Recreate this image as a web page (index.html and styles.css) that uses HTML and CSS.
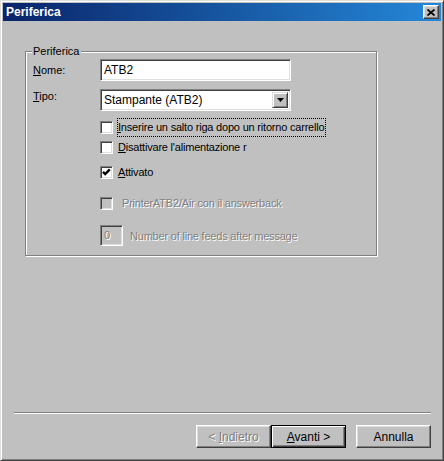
FILE: index.html
```html
<!DOCTYPE html>
<html lang="it">
<head>
    <meta charset="UTF-8">
    <title>Periferica</title>
    <link rel="stylesheet" href="styles.css">
</head>
<body>
    <div class="window">
        <div class="titlebar">
            <span class="title">Periferica</span>
            <div class="close-btn">
                <svg width="8" height="7" viewBox="0 0 8 7">
                    <path d="M0.5 0.5 L7.5 6.5 M7.5 0.5 L0.5 6.5" stroke="#000" stroke-width="1.7" fill="none"/>
                </svg>
            </div>
        </div>

        <div class="content">
            <div class="group">
                <span class="legend">Periferica</span>

                <div class="field-row">
                    <span class="field-label label-nome"><u>N</u>ome:</span>
                    <div class="textbox">ATB2</div>
                </div>

                <div class="field-row row-tipo">
                    <span class="field-label label-tipo"><u>T</u>ipo:</span>
                    <div class="combo">
                        <span class="combo-text">Stampante (ATB2)</span>
                        <div class="combo-btn">
                            <svg width="7" height="4" viewBox="0 0 7 4">
                                <polygon points="0,0 7,0 3.5,4" fill="#000"/>
                            </svg>
                        </div>
                    </div>
                </div>

                <div class="check-row row-1">
                    <span class="checkbox"></span>
                    <span class="check-label focused"><u>I</u>nserire un salto riga dopo un ritorno carrello</span>
                </div>
                <div class="check-row">
                    <span class="checkbox"></span>
                    <span class="check-label"><u>D</u>isattivare l'alimentazione r</span>
                </div>
                <div class="check-row row-3">
                    <span class="checkbox">
                        <svg width="9" height="9" viewBox="0 0 9 9">
                            <polyline points="1,3.8 3.2,6 7.8,1.4" stroke="#000" stroke-width="2.4" fill="none"/>
                        </svg>
                    </span>
                    <span class="check-label"><u>A</u>ttivato</span>
                </div>
                <div class="check-row row-4 disabled">
                    <span class="checkbox"></span>
                    <span class="check-label">PrinterATB2/Air con il answerback</span>
                </div>
                <div class="check-row row-5 disabled">
                    <div class="numbox">0</div>
                    <span class="num-label">Number of line feeds after message</span>
                </div>
            </div>
        </div>

        <div class="footer">
            <div class="separator"></div>
            <div class="buttons">
                <div class="btn disabled"><span>&lt; <u>I</u>ndietro</span></div>
                <div class="btn default"><span><u>A</u>vanti &gt;</span></div>
                <div class="btn cancel"><span>Annulla</span></div>
            </div>
        </div>
    </div>
</body>
</html>
```

FILE: styles.css
```css
body {
    margin: 0;
    padding: 0;
    background-color: #c0c0c0;
    font-family: "Liberation Sans", Arial, sans-serif;
    font-size: 11px;
    color: #000;
}
.window {
    width: 444px;
    height: 461px;
    box-sizing: border-box;
    border: 1px solid;
    border-color: #dfdfdf #404040 #404040 #dfdfdf;
    box-shadow: inset 1px 1px #fff, inset -1px -1px #808080;
    padding: 2px;
    display: flex;
    flex-direction: column;
    background-color: #c0c0c0;
}
.titlebar {
    height: 18px;
    flex: none;
    display: flex;
    align-items: center;
    justify-content: space-between;
    padding: 0 2px 0 3px;
    background: linear-gradient(to right, #0a246a, #2488d8);
}
.title {
    color: #fff;
    font-weight: bold;
    font-size: 12px;
}
.close-btn {
    width: 16px;
    height: 14px;
    box-sizing: border-box;
    border: 1px solid;
    border-color: #fff #404040 #404040 #fff;
    box-shadow: inset -1px -1px #808080, inset 1px 1px #dfdfdf;
    background-color: #c0c0c0;
    display: flex;
    align-items: center;
    justify-content: center;
}
.close-btn svg {
    display: block;
    margin-left: -1px;
}
.content {
    flex: 1;
    padding: 30px 0 0 22px;
}
.group {
    position: relative;
    width: 352px;
    height: 205px;
    box-sizing: border-box;
    border: 1px solid #808080;
    box-shadow: inset 1px 1px #fff, 1px 1px #fff;
    padding: 7px 0 0 7px;
}
.legend {
    position: absolute;
    left: 6px;
    top: -7px;
    padding: 0 2px 0 1px;
    line-height: 13px;
    background-color: #c0c0c0;
}
.field-row {
    display: flex;
    align-items: flex-start;
    height: 22px;
    margin-bottom: 8px;
}
.row-tipo {
    margin-bottom: 6px;
}
.field-label {
    width: 67px;
    flex: none;
    line-height: 13px;
}
.label-nome {
    padding-top: 5px;
}
.label-tipo {
    padding-top: 1px;
}
.textbox,
.combo,
.checkbox,
.numbox {
    box-sizing: border-box;
    border: 1px solid;
    border-color: #808080 #fff #fff #808080;
    box-shadow: inset 1px 1px #404040, inset -1px -1px #dfdfdf;
    background-color: #fff;
}
.textbox {
    width: 191px;
    height: 22px;
    padding: 0 3px;
    line-height: 20px;
    font-size: 12px;
}
.combo {
    width: 191px;
    height: 22px;
    display: flex;
    align-items: center;
    justify-content: space-between;
    padding: 2px;
}
.combo-text {
    padding-left: 1px;
    font-size: 12px;
}
.combo-btn {
    width: 16px;
    height: 16px;
    box-sizing: border-box;
    border: 1px solid;
    border-color: #dfdfdf #404040 #404040 #dfdfdf;
    box-shadow: inset 1px 1px #fff, inset -1px -1px #808080;
    background-color: #c0c0c0;
    display: flex;
    align-items: center;
    justify-content: center;
}
.combo-btn svg {
    display: block;
}
.check-row {
    display: flex;
    align-items: center;
    height: 20px;
    margin-left: 67px;
    letter-spacing: -0.2px;
}
.row-3 {
    margin-top: 5px;
}
.row-4 {
    margin-top: 11px;
}
.row-5 {
    margin-top: 12px;
    height: 21px;
}
.checkbox {
    width: 13px;
    height: 13px;
    flex: none;
    display: flex;
    align-items: center;
    justify-content: center;
}
.checkbox svg {
    display: block;
}
.check-label {
    margin-left: 4px;
    padding: 1px 1px 1px 0;
    line-height: 15px;
    border: 1px dotted transparent;
    white-space: nowrap;
}
.check-label.focused {
    border-color: #000;
    width: 206px;
    overflow: hidden;
}
.disabled .checkbox {
    background-color: #c0c0c0;
}
.disabled .check-label {
    margin-left: 8px;
}
.disabled .check-label,
.disabled .num-label,
.numbox {
    color: #808080;
    text-shadow: 1px 1px #fff;
}
.numbox {
    width: 23px;
    height: 21px;
    padding-left: 3px;
    line-height: 19px;
    background-color: #c0c0c0;
}
.num-label {
    margin-left: 7px;
}
.footer {
    flex: none;
}
.separator {
    height: 0;
    border-top: 1px solid #808080;
    border-bottom: 1px solid #fff;
    margin: 0 10px 0 11px;
}
.buttons {
    display: flex;
    justify-content: flex-end;
    padding: 11px 10px 10px 0;
}
.btn {
    width: 75px;
    height: 23px;
    box-sizing: border-box;
    border: 1px solid;
    border-color: #fff #404040 #404040 #fff;
    box-shadow: inset -1px -1px #808080, inset 1px 1px #dfdfdf;
    display: flex;
    align-items: center;
    justify-content: center;
    font-size: 12px;
}
.btn.disabled {
    color: #808080;
    text-shadow: 1px 1px #fff;
}
.btn.default {
    border-color: #000;
    box-shadow: inset 1px 1px #fff, inset -1px -1px #404040, inset -2px -2px #808080;
}
.btn.cancel {
    margin-left: 10px;
}
```
